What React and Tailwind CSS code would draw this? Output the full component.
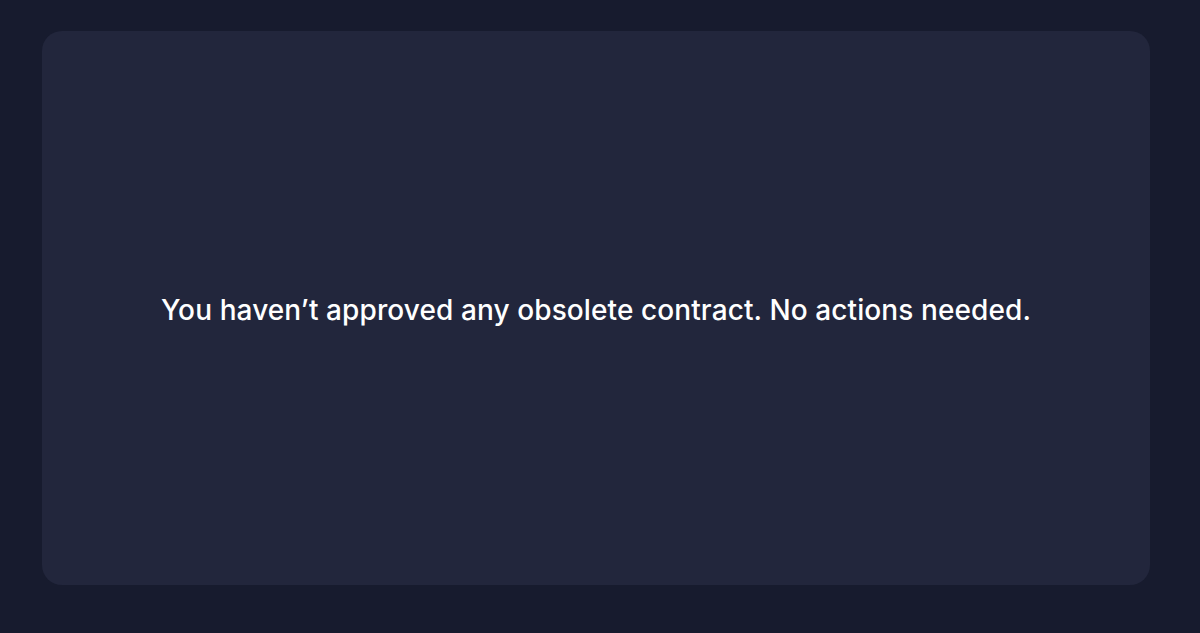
export default function App() {
  return (
    <div className="h-[633px] w-full bg-[#171b2e] pt-[31px] pl-[42px] pr-[50px] pb-[48px]">
      {/* Card */}
      <div className="flex h-full w-full items-center justify-center rounded-[20px] bg-[#22263c]">
        <p className="mt-[4px] font-['Inter',sans-serif] text-[28px] font-medium tracking-[0.1px] text-white">
          You haven’t approved any obsolete contract. No actions needed.
        </p>
      </div>
    </div>
  );
}
